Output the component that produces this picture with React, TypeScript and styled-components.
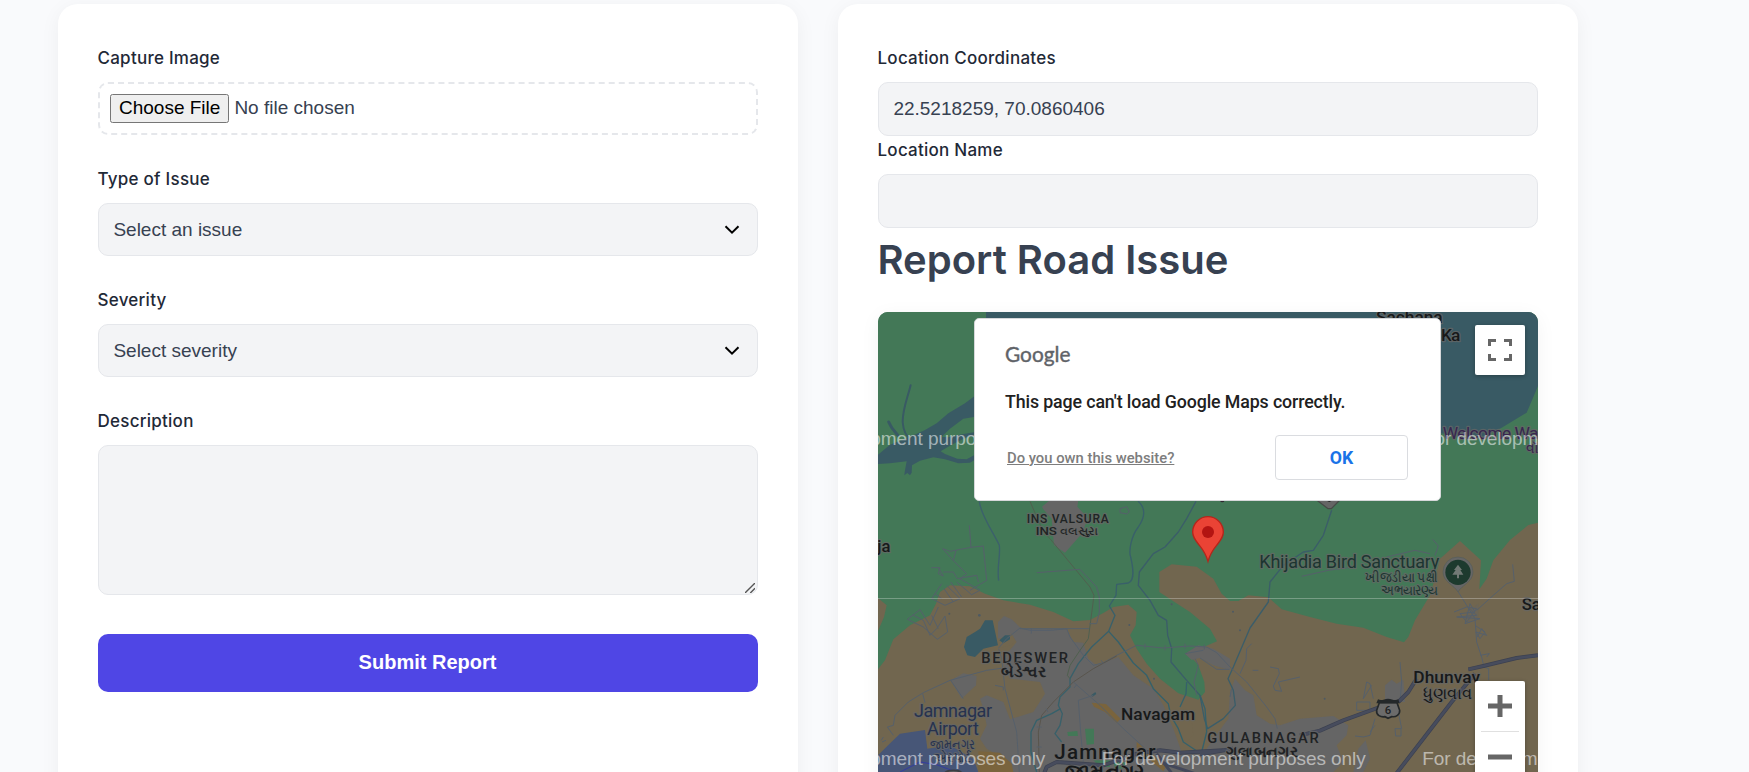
import React from "react";
import styled, { createGlobalStyle } from "styled-components";

const GlobalStyle = createGlobalStyle`
  *, *::before, *::after { box-sizing: border-box; }
  html, body { margin: 0; height: 772px; overflow: hidden; }
  body {
    background: #f9fafc;
    color: #374151;
    font-family: Inter, "Liberation Sans", sans-serif;
  }
`;

const Page = styled.main`
  height: 772px;
  overflow: hidden;
  padding: 4px 171px 0 58px;
  display: grid;
  grid-template-columns: 740px 740px;
  gap: 40px;
`;

const Card = styled.section`
  height: 900px;
  padding: 40px;
  background: #fff;
  border-radius: 20px;
  box-shadow: 0 4px 20px rgba(0, 0, 0, 0.05);
`;

const Field = styled.div<{ $gap?: number }>`
  display: flex;
  flex-direction: column;
  margin-bottom: ${(p) => p.$gap ?? 30}px;
`;

const Label = styled.label`
  height: 30px;
  margin: 0 0 8px -0.5px;
  line-height: 28px;
  font-size: 17px;
  font-weight: 500;
  letter-spacing: 0.25px;
  color: #1f2937;
`;

const controlFont = `
  font-family: "Liberation Sans", Arial, sans-serif;
  font-size: 19px;
  color: #374151;
`;

const control = `
  ${controlFont}
  width: 100%;
  background-color: #f3f4f6;
  border: 1px solid #e5e7eb;
  border-radius: 10px;
  outline: none;
`;

const FileInput = styled.input`
  ${controlFont}
  width: 100%;
  height: 53px;
  padding: 10px;
  border: 2px dashed #e5e7eb;
  border-radius: 10px;
  &::file-selector-button {
    height: 29px;
    padding: 0 7px 1px;
    margin-right: 5px;
    font: inherit;
  }
`;

const TextInput = styled.input`
  ${control}
  height: 54px;
  padding: 0 14.4px 1px;
`;

const Select = styled.select`
  ${control}
  height: 53px;
  padding: 0 44px 0 14.4px;
  appearance: none;
`;

const SelectBox = styled.div`
  position: relative;
  height: 53px;
`;

const Chevron = styled.svg`
  position: absolute;
  right: 18px;
  top: 22px;
  pointer-events: none;
`;

const TextAreaBox = styled.div`
  position: relative;
  height: 150px;
`;

const TextArea = styled.textarea`
  ${control}
  display: block;
  height: 150px;
  padding: 14px;
  resize: none;
`;

const Grip = styled.svg`
  position: absolute;
  right: 3px;
  bottom: 2px;
  pointer-events: none;
`;

const Submit = styled.button`
  width: 100%;
  height: 58px;
  margin-top: 9px;
  padding: 0 1px 2px 0;
  border: 0;
  border-radius: 10px;
  background: #4f46e5;
  color: #fff;
  font: 700 20px "Liberation Sans", Arial, sans-serif;
`;

const Title = styled.h1`
  margin: 0 0 20px -0.5px;
  height: 64px;
  line-height: 64px;
  font-size: 40px;
  font-weight: 600;
  color: #374151;
`;

const MapFrame = styled.div`
  position: relative;
  height: 500px;
  border-radius: 10px;
  overflow: hidden;
  background: #437857;
  box-shadow: 0 4px 20px rgba(0, 0, 0, 0.05);
`;

const MapDrawing = styled.svg`
  display: block;
  width: 660px;
  height: 500px;
`;

const Dialog = styled.div`
  position: absolute;
  left: 96px;
  top: 6px;
  width: 467px;
  height: 183px;
  padding: 25px 32px 19px 30px;
  background: #fff;
  border: 1px solid #d6d8da;
  border-radius: 5px;
  font-family: Roboto, sans-serif;
`;

const Logo = styled.svg`
  display: block;
`;

const Message = styled.p`
  margin: 20px 0 0;
  line-height: 24px;
  font-size: 17.8px;
  font-weight: 500;
  letter-spacing: -0.12px;
  color: #212121;
`;

const DialogRow = styled.div`
  display: flex;
  justify-content: space-between;
  align-items: center;
  margin-top: 21px;
`;

const OwnerLink = styled.a`
  padding-left: 2px;
  font-size: 14.8px;
  font-weight: 500;
  color: #7d7d7d;
  text-decoration: underline;
`;

const OkButton = styled.button`
  width: 133px;
  height: 45px;
  background: #fff;
  border: 1px solid #dadce0;
  border-radius: 4px;
  color: #1a73e8;
  font: 700 17.7px Roboto, sans-serif;
`;

const MapButton = styled.button`
  position: absolute;
  right: 13px;
  top: 13px;
  width: 50px;
  height: 50px;
  padding: 0;
  display: grid;
  place-items: center;
  background: #fff;
  border: 0;
  border-radius: 2px;
  box-shadow: 0 1px 4px rgba(0, 0, 0, 0.3);
`;

const ZoomControl = styled.div`
  position: absolute;
  right: 13px;
  top: 369px;
  width: 50px;
  height: 101px;
  display: flex;
  flex-direction: column;
  align-items: center;
  background: #fff;
  border-radius: 2px;
  box-shadow: 0 1px 4px rgba(0, 0, 0, 0.3);
`;

const ZoomStep = styled.button`
  width: 50px;
  height: 50px;
  padding: 0;
  display: grid;
  place-items: center;
  border: 0;
  background: none;
`;

const Divider = styled.div`
  width: 38px;
  height: 1px;
  background: #e0e0e0;
`;

const BROWN = "#71664f";
const GREY = "#656565";
const WATER = "#395a64";

type PlaceProps = {
  x: number;
  y: number;
  size: number;
  children: string;
  length?: number;
  anchor?: "start" | "middle" | "end";
  weight?: number;
  fill?: string;
  glyphs?: boolean;
};

const Place = ({ x, y, size, children, length, anchor = "middle", weight = 500, fill = "#17191a", glyphs }: PlaceProps) => (
  <text
    x={x}
    y={y}
    fontSize={size}
    fontWeight={weight}
    fill={fill}
    textAnchor={anchor}
    textLength={length}
    lengthAdjust={glyphs ? "spacingAndGlyphs" : "spacing"}
    stroke="#666"
    strokeOpacity={0.75}
    strokeWidth={7}
    strokeLinejoin="round"
    paintOrder="stroke"
  >
    {children}
  </text>
);

const Watermark = ({ x, y }: { x: number; y: number }) => (
  <text x={x} y={y} fontSize={57} textLength={792} fill="#fff" fillOpacity={0.55} fontFamily="Liberation Sans, Arial, sans-serif">
    For development purposes only
  </text>
);

const CityMap = () => (
  <MapDrawing viewBox="24 -660 1980 1500" fontFamily="Roboto, 'Noto Sans', sans-serif">
    <rect x="24" y="-660" width="1980" height="1500" fill="#437857" />

    {/* gulf and creeks */}
    <path fill={WATER} d="M348-660H2004V-438L1970-358 1895-313 1840-286 1710-296 1340-500 348-560Z" />
    <path fill={WATER} d="M330-420L285-386 235-356 200-326 165-306 120-286 60-262 24-232V-204L60-206 110-212 104-180 103-170 112-177 120-170 125-178 126-200 150-214 190-224 225-218 265-206 300-208 330-226V-240L290-218 262-220 225-234 212-242 245-262 290-284 330-292V-302L280-294 235-284 215-286 240-310 280-340 330-348Z" />
    <g fill="none" stroke={WATER} strokeLinecap="round">
      <path strokeWidth="6" d="M122-440C112-400 98-370 98-330C100-300 110-285 125-275" />
      <path strokeWidth="9" d="M56-330C64-310 76-300 84-290" />
    </g>

    {/* farmland */}
    <path fill={BROWN} d="M24 198L50 220 42 255 24 297Z" />
    <path fill={BROWN} d="M24 412L45 385 70 322 120 280 180 250 198 215 210 180 240 160 300 163 345 185 400 205 480 218 550 240 610 268 660 264 700 243 730 225 775 218 800 240 797 280 780 310 800 350 830 395 870 440 925 484 985 503 1005 480 1003 450 985 400 962 372 985 352 1041 328 1020 290 960 240 910 208 868 180V120L905 97 980 104 1030 140 1055 185 1080 207H1105L1135 190 1195 196 1235 232 1320 255 1400 275 1480 287 1550 315 1602 331 1615 315 1635 265 1680 190 1700 120 1710 80 1770 27 1833 85 1828 172 1850 140 1870 85 1920 24 1975-21 2004-28V840H24Z" />

    {/* built-up areas */}
    <g fill={GREY}>
      <path d="M516-76L540-96H625L622-76 655-40 645-20 640 0 585 62 552 40 545-40 520-68Z" />
      <path d="M384 270L402 252 425 262 455 290 590 292 610 330 640 332 655 380 680 400 745 375 790 430 850 470 880 520 910 590 935 660 1010 650 1060 580 1075 560 1080 480 1095 440 1125 475 1150 490 1160 550 1200 575 1230 580 1290 560 1390 552 1435 580 1430 610 1400 640 1420 690 1390 720 1400 840H430L420 690 350 650 330 620 350 580 340 530 330 500 350 490 400 510 420 562 490 540 525 485 510 450 420 440 400 400 415 360 440 330 425 310 384 320Z" />
      <path d="M242 445L280 424 320 432 318 460 275 500Z" />
      <path d="M945 365L985 340 1030 350 1080 380V415L1030 400 990 378 965 384Z" />
      <path d="M1545 460L1565 443 1580 455 1600 443 1605 510H1545Z" />
      <path d="M1465 650L1487 625 1500 680 1480 720H1450Z" />
      <path d="M1790 240L1825 215 1825 255 1790 275Z" fillOpacity=".4" />
    </g>
    <path fill={BROWN} d="M390 325L425 305 436 325 425 340 386 348ZM935 545L965 565 970 610 950 630 915 590Z" />
    <path fill="#475677" d="M24 670L62 632 90 605 165 594 172 650 240 640 310 680 325 720 340 840H24Z" />
    <path fill="#437857" d="M592 600L622 597 624 612H594ZM645 590H672V636L650 638ZM670 685H720V705H690ZM730 690H765V710H735Z" />
    <path fill="#7a643d" d="M665 512L708 516 752 560 740 572 705 540 672 524ZM325 658L390 662 425 695 430 720H325ZM800 630L890 700 880 718 800 650Z" />
    <path fill={WATER} d="M290 315L315 300 330 290 345 265H368L384 340 340 350 315 375 292 370 282 345ZM388 325L405 310 420 310 420 322 400 334ZM663 490L676 480 679 486 668 494Z" />

    {/* rivers */}
    <g fill="none" stroke="#35616b" strokeWidth="4" strokeLinejoin="round">
      <path d="M328-92C332-50 370 0 388 40C392 75 380 100 386 146" stroke="#3c606c" />
      <path d="M804-92C830-70 822-40 805-15C785 10 775 55 782 75C790 110 795 145 775 153L740 157 738 190 718 222 735 250 716 298 665 345 625 395 600 440V465L570 495 565 520 577 545 570 580 555 605 575 630" stroke="#39606a" />
      <path d="M716 298L745 330 790 393 830 430 850 470 895 515 902 550 925 590 940 630 985 660" />
      <path d="M978-92L950-40 925 0 885 45 850 65 808 120 805 160 840 205 865 250 890 265 893 310 905 350 903 390 950 445 990 490 1003 560 1013 590 1060 560 1096 520 1090 475 1074 440 1090 405 1140 288 1195 210 1200 150 1240 100 1300 60 1330 55 1360 10 1385-65" stroke="#3b5d69" />
      <path d="M572 530L545 545 500 565 483 600V660L500 720" />
      <path d="M950 450L948 485 930 525 M990 490L1005 530 1010 600 995 660" />
    </g>

    {/* railways and minor roads */}
    <g fill="none" stroke="#56606b" strokeWidth="3" strokeLinejoin="round">
      <path d="M386 348L410 320 450 288 480 295H545L590 290 600 315 640 370 670 400 700 392 740 370 800 340 880 348 960 342 1010 345 1040 362 1080 405 1130 450 1190 525 1215 560 1222 590" />
      <path d="M450 290H658" />
      <path d="M386 350L395 380 405 470 440 600 448 720" />
      <path d="M740 372L670 410 610 450 550 510 515 550 505 600 508 720" stroke="#59554d" />
      <path d="M610 450L690 520 760 590 870 690" />
      <path d="M600 440L592 430 600 400 630 355 655 320 672 190 660 165 540 20 520 0 480-92" stroke="#50604f" />
      <path d="M500 122L630 112 680 165 688 195V240L680 275H658" />
      <path d="M298-20L303 46 240 58 218 50 250 86 258 55M303 46L340 42 350 145 300 175M250 86L290 125 270 140 330 175 305 188 260 150M184 107H210L205 125 220 132 205 108M220 120H250L262 140 320 130 325 150M215 155L185 200 225 220 270 200 230 160M195 185L215 200M112 262L150 233 180 280 205 225M112 262L160 285 202 322 233 300 225 252 200 290 180 310 160 265 130 250M185 250L205 290M242 150L275 195M222 170L250 210" />
      <path d="M400 408L350 415 240 445 160 482 115 510 75 550 70 580 52 585 70 610M158 485L165 512M242 445L280 500M375 460L400 465V475M34 625L40 615M36 630L48 625" />
      <path d="M625 505L670 490M625 505L632 600 640 690M975 380L985 400 972 450 980 490M990 378L1040 412H1078M945 365L1000 355M1080 495L1085 470" />
      <path d="M750-70L770-76 778-60 770-54 750-58Z M484 290V305M825 335V350M885 340V355M945 335V350M1003 338V352M500 585H515M500 645H515M528 530L534 540M620 458L612 468M700 395L694 385" />
      <path d="M1148 415H1165M1200 405L1225 410 1228 425 1210 462 1215 475 1235 478 1225 450 1290 435M1145 335L1130 350 1128 385 1110 425M1590 390L1595 450 1590 510M1480 500L1490 450 1500 455 1510 500M1480 500L1505 460M1460 510H1500V535H1460ZM1515 560L1500 610 1480 615 1455 612M1500 600L1515 580M1585 540L1595 590M1575 590H1593V612H1577Z" />
      <path d="M1765 180L1790 220 1815 260 1820 330 1835 375 1842 405 1856 410V445M1820 235L1870 190 1910 155 1933 148 1928 97M1752 240L1790 225 1820 230 1790 270 1770 245 1815 240 1800 215 1785 275 1830 260 1760 255 1820 250 1795 225M1815 280L1845 300 1830 320 1818 300 1850 310 1835 290 1822 315M1830 370L1858 365 1850 375" />
      <path d="M1295 133L1375 115 1450 105M1550 75L1635 55 1680 65M1688 22L1705 42 1695 70" />
    </g>

    {/* highways */}
    <g fill="none" strokeLinejoin="round">
      <g stroke="#3c4150" strokeWidth="12">
        <path d="M990 667L1090 650M1290 610L1350 596 1420 565 1525 527M1585 510L1615 480 1640 440M1795 412L1840 402 1940 378 2004 370M1575 730L1745 510 1815 425M520 730L530 705 560 690 700 700 800 665 870 655 930 662 1060 655" />
      </g>
      <g stroke="#474c5d" strokeWidth="8">
        <path d="M990 667L1090 650M1290 610L1350 596 1420 565 1525 527M1585 510L1615 480 1640 440M1795 412L1840 402 1940 378 2004 370M1575 730L1745 510 1815 425M520 730L530 705 560 690 700 700 800 665 870 655 930 662 1060 655" />
      </g>
      <path stroke="#43485a" strokeWidth="9" d="M860 665L910 730M870 690L990 730M740 650L755 700" />
    </g>
    <g fill="#4e5a63">
      <circle cx="778" cy="279" r="3" /><circle cx="852" cy="440" r="3" /><circle cx="1089" cy="239" r="3" /><circle cx="1110" cy="295" r="3" /><circle cx="1364" cy="500" r="3" />
      <circle cx="905" cy="217" r="3" /><circle cx="328" cy="250" r="4" /><circle cx="238" cy="245" r="3" />
    </g>
    <path fill="none" stroke="#343ca0" strokeWidth="3" d="M90 720L150 690 200 698 245 715" />
    <path fill="#666" stroke="#3a3d42" strokeWidth="5" d="M222 725C232 712 268 712 278 725" />

    {/* place names */}
    <Place x={593} y={-27} size={36} length={246} fill="#1f2424">INS VALSURA</Place>
    <Place x={592} y={8} size={34} length={190} glyphs fill="#1f2424">INS વલસુરા</Place>
    <Place x={22} y={59} size={50} anchor="start">ja</Place>
    <Place x={464} y={394} size={44} length={260} fill="#202224">BEDESWER</Place>
    <Place x={462} y={436} size={46} length={136} glyphs weight={600} fill="#202224">બેડેશ્વર</Place>
    <Place x={249} y={556} size={54} length={234} weight={400} fill="#26324e">Jamnagar</Place>
    <Place x={249} y={609} size={54} length={156} weight={400} fill="#26324e">Airport</Place>
    <Place x={248} y={650} size={40} length={134} glyphs weight={400} fill="#26324e">જામનગર</Place>
    <Place x={248} y={690} size={40} length={112} glyphs weight={400} fill="#26324e">એરપોર્ટ</Place>
    <Place x={864} y={563} size={52} length={222}>Navagam</Place>
    <Place x={705} y={681} size={62} length={304}>Jamnagar</Place>
    <Place x={705} y={742} size={64} length={238} glyphs weight={600}>જામનગર</Place>
    <Place x={1179} y={633} size={44} length={334} fill="#202224">GULABNAGAR</Place>
    <Place x={1176} y={675} size={44} length={216} glyphs weight={600} fill="#202224">ગુલાબનગર</Place>
    <Place x={1708} y={108} size={54} anchor="end" length={540} weight={400} fill="#1c3530">Khijadia Bird Sanctuary</Place>
    <Place x={1704} y={149} size={43} anchor="end" length={218} glyphs weight={400} fill="#1c3530">ખીજડીયા પક્ષી</Place>
    <Place x={1704} y={190} size={43} anchor="end" length={172} glyphs weight={400} fill="#1c3530">અભયારણ્ય</Place>
    <Place x={1955} y={234} size={50} anchor="start">Sa</Place>
    <Place x={1730} y={454} size={52} length={200}>Dhunvav</Place>
    <Place x={1732} y={502} size={48} length={148} glyphs>ધુણવાવ</Place>
    <Place x={1618} y={-627} size={52} length={200}>Sachana</Place>
    <Place x={1713} y={-573} size={52} anchor="start" length={58}>Ka</Place>
    <Place x={1718} y={-278} size={52} anchor="start" weight={400} length={345} fill="#38264f">Welcome Water</Place>
    <Place x={1968} y={-238} size={42} anchor="start" weight={400} fill="#38264f">વૉટર</Place>

    {/* highway shield */}
    <path fill="#6b6b6b" stroke="#24282a" strokeWidth="5" d="M1528 512L1520 535C1518 550 1532 556 1545 554L1554 559 1565 554C1578 556 1590 548 1589 535L1581 512Z" />
    <path fill="#24282a" d="M1524 502C1535 508 1542 500 1554 500C1566 500 1574 508 1585 502L1589 514H1519Z" />
    <text x="1554" y="545" fontSize="34" fontWeight="500" textAnchor="middle" fill="#202224">6</text>

    {/* sanctuary marker */}
    <path fill="#666" stroke="#555c58" strokeWidth="2" d="M1764 180C1754 160 1719 150 1719 120A45 45 0 0 1 1809 120C1809 150 1774 160 1764 180Z" />
    <circle cx="1764" cy="121" r="38" fill="#1d3a2e" />
    <path fill="#717975" d="M1764 98L1776 114H1771L1780 128H1767V139H1761V128H1747L1757 114H1752Z" />
    <path fill="#656565" stroke="#454a46" strokeWidth="4" d="M1340-96L1374-70 1384-70 1410-96Z" />
    <path fill="#222" d="M1365-96H1390L1378-90Z" />

    {/* tile edge and watermarks */}
    <rect x="24" y="198" width="1980" height="3" fill="#fff" fillOpacity=".28" />
    <Watermark x={-266} y={-262} />
    <Watermark x={1659} y={-262} />
    <Watermark x={-266} y={699} />
    <Watermark x={695} y={699} />
    <Watermark x={1657} y={699} />

    {/* pin */}
    <ellipse cx="1057" cy="-93" rx="6" ry="4" fill="#2f2630" />
    <path fill="#ea4335" stroke="#b5261b" strokeWidth="4" d="M1014 88C1006 60 996 50 985 36C974 22 968 14 968 0A46 46 0 0 1 1060 0C1060 14 1054 22 1043 36C1032 50 1022 60 1014 88Z" />
    <circle cx="1014" cy="0" r="18" fill="#b31412" />
  </MapDrawing>
);

const Dropdown = ({ id, placeholder }: { id: string; placeholder: string }) => (
  <SelectBox>
    <Select id={id} defaultValue="">
      <option value="">{placeholder}</option>
    </Select>
    <Chevron width="16" height="10" viewBox="0 0 16 10" fill="none" stroke="#000" strokeWidth="2">
      <path d="M1.5 1.2L8 7.7 14.5 1.2" />
    </Chevron>
  </SelectBox>
);

export default function App() {
  return (
    <>
      <GlobalStyle />
      <Page>
        <Card>
          <Field>
            <Label htmlFor="image">Capture Image</Label>
            <FileInput id="image" type="file" />
          </Field>
          <Field>
            <Label htmlFor="issue">Type of Issue</Label>
            <Dropdown id="issue" placeholder="Select an issue" />
          </Field>
          <Field>
            <Label htmlFor="severity">Severity</Label>
            <Dropdown id="severity" placeholder="Select severity" />
          </Field>
          <Field>
            <Label htmlFor="description">Description</Label>
            <TextAreaBox>
              <TextArea id="description" />
              <Grip width="10" height="10" viewBox="0 0 10 10" fill="none" stroke="#555" strokeWidth="1.4">
                <path d="M0 10L10 0M5.3 10L10 5.3" />
              </Grip>
            </TextAreaBox>
          </Field>
          <Submit>Submit Report</Submit>
        </Card>
        <Card>
          <Field $gap={0}>
            <Label htmlFor="coords">Location Coordinates</Label>
            <TextInput id="coords" readOnly value="22.5218259, 70.0860406" />
          </Field>
          <Field $gap={0}>
            <Label htmlFor="name">Location Name</Label>
            <TextInput id="name" readOnly value="" />
          </Field>
          <Title>Report Road Issue</Title>
          <MapFrame>
            <CityMap />
            <MapButton aria-label="Fullscreen">
              <svg width="24" height="22" viewBox="0 0 24 22" fill="none" stroke="#666" strokeWidth="3">
                <path d="M1.5 7V1.5H8M16 1.5H22.5V7M22.5 15V20.5H16M8 20.5H1.5V15" />
              </svg>
            </MapButton>
            <ZoomControl>
              <ZoomStep aria-label="Zoom in">
                <svg width="24" height="24" viewBox="0 0 24 24" fill="#666">
                  <path d="M9.5 1H14.5V9.5H24V14.5H14.5V23H9.5V14.5H0V9.5H9.5Z" />
                </svg>
              </ZoomStep>
              <Divider />
              <ZoomStep aria-label="Zoom out">
                <svg width="24" height="6" viewBox="0 0 24 6" fill="#666">
                  <path d="M0 .5H24V5.5H0Z" />
                </svg>
              </ZoomStep>
            </ZoomControl>
            <Dialog>
              <Logo width="68" height="26" viewBox="0 0 68 26">
                <text x="0" y="17.5" fontFamily="Lato, sans-serif" fontSize="21.5" textLength="65.5" lengthAdjust="spacingAndGlyphs" fill="#5f6368" stroke="#5f6368" strokeWidth=".4">
                  Google
                </text>
              </Logo>
              <Message>This page can't load Google Maps correctly.</Message>
              <DialogRow>
                <OwnerLink>Do you own this website?</OwnerLink>
                <OkButton>OK</OkButton>
              </DialogRow>
            </Dialog>
          </MapFrame>
        </Card>
      </Page>
    </>
  );
}
